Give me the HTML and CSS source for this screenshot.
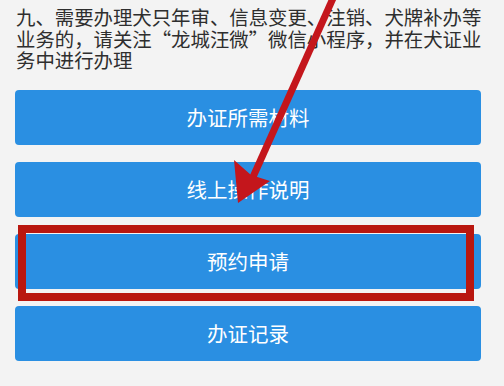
FILE: index.html
```html
<!DOCTYPE html>
<html lang="zh-CN">
<head>
<meta charset="utf-8">
<link rel="stylesheet" href="styles.css">
</head>
<body>
<div class="page">
  <p class="notice">九、需要办理犬只年审、信息变更、注销、犬牌补办等业务的，请关注“龙城汪微”微信小程序，并在犬证业务中进行办理</p>
  <div class="buttons">
    <div class="btn">办证所需材料</div>
    <div class="btn">线上操作说明</div>
    <div class="btn">预约申请</div>
    <div class="btn">办证记录</div>
  </div>
  <div class="highlight"></div>
  <svg class="arrow" width="504" height="386" viewBox="0 0 504 386">
    <line x1="334" y1="-4" x2="253" y2="177" stroke="#c4161c" stroke-width="7"/>
    <polygon points="238,203 234,160 251,175 270,181" fill="#c4161c"/>
  </svg>
</div>
</body>
</html>
```
FILE: styles.css
```css
html, body {
  margin: 0;
  padding: 0;
  background: #f3f3f3;
}
.page {
  position: relative;
  width: 504px;
  height: 386px;
  overflow: hidden;
  font-family: "Noto Sans CJK SC", "Noto Sans", sans-serif;
}
.notice {
  margin: 0;
  padding: 6px 18px 0 16px;
  font-size: 19.4px;
  line-height: 21.5px;
  color: #2e2e2e;
}
.buttons {
  display: flex;
  flex-direction: column;
  gap: 17px;
  padding: 19px 23px 0 15px;
}
.btn {
  height: 55px;
  background: #2a8fe2;
  border-radius: 4px;
  color: #ffffff;
  font-size: 20.5px;
  display: flex;
  align-items: center;
  justify-content: center;
}
.highlight {
  position: absolute;
  left: 18px;
  top: 225px;
  width: 440px;
  height: 60px;
  border: 8px solid #b9170f;
}
.arrow {
  position: absolute;
  left: 0;
  top: 0;
  pointer-events: none;
}
```
